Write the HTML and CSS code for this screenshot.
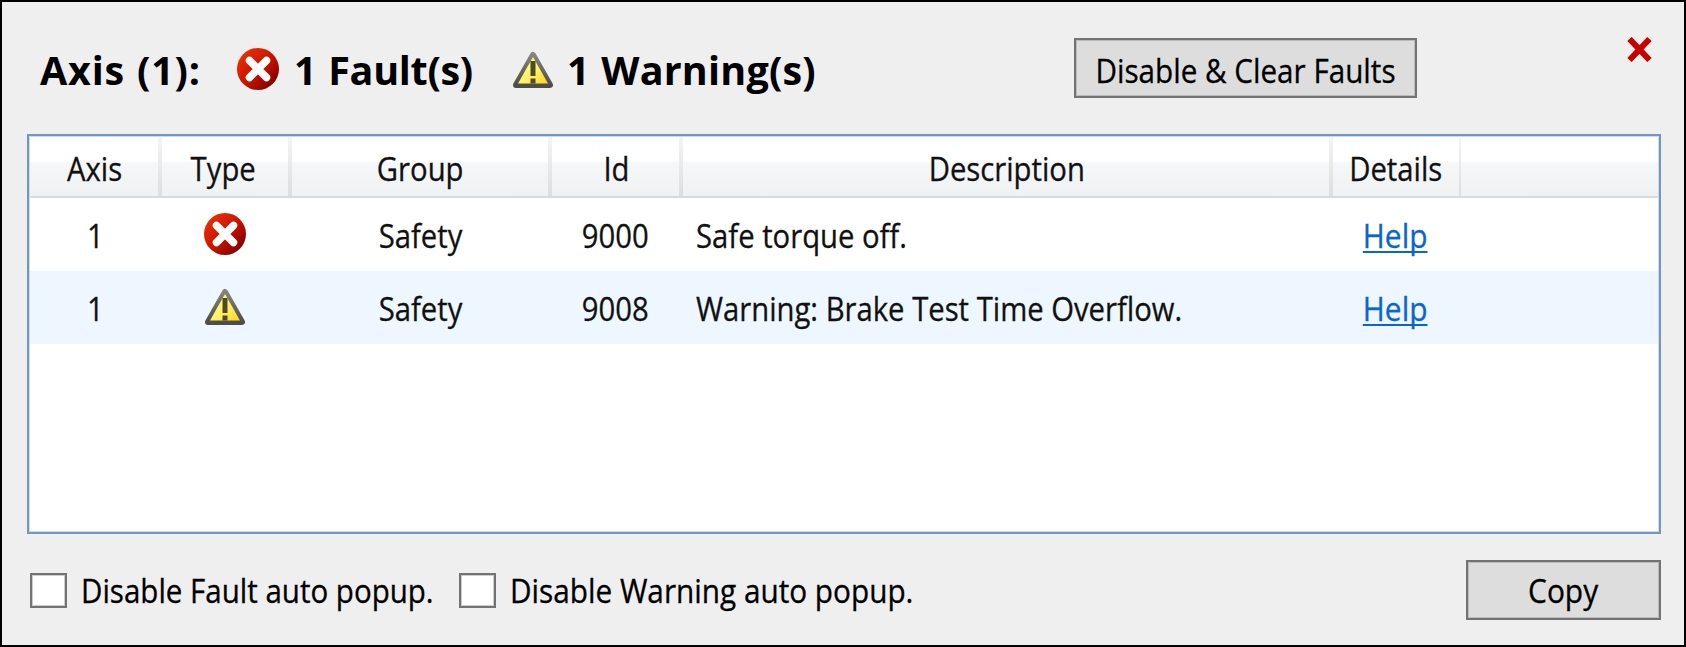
FILE: index.html
```html
<!DOCTYPE html>
<html lang="en">
<head>
<meta charset="utf-8">
<title>Axis faults</title>
<link rel="stylesheet" href="styles.css">
</head>
<body>
<svg class="defs" width="0" height="0" aria-hidden="true">
  <defs>
    <linearGradient id="red" x1="0" y1="0" x2="1" y2="1">
      <stop offset="0.1" stop-color="#e83008"/><stop offset="0.5" stop-color="#cc1400"/><stop offset="0.9" stop-color="#7c0000"/>
    </linearGradient>
    <linearGradient id="yellow" x1="0" y1="0" x2="1" y2="1">
      <stop offset="0.2" stop-color="#fffb90"/><stop offset="0.6" stop-color="#fff060"/><stop offset="1" stop-color="#ffd21c"/>
    </linearGradient>
    <linearGradient id="edge" x1="0" y1="0" x2="0" y2="1">
      <stop offset="0" stop-color="#85857d"/><stop offset="1" stop-color="#4e4e48"/>
    </linearGradient>
    <symbol id="fault" viewBox="0 0 42 42">
      <circle cx="21" cy="21" r="21" fill="url(#red)"/>
      <path d="M12.500 12.500L29.500 29.500M29.500 12.500L12.500 29.500" stroke="#fff" stroke-width="7.500" stroke-linecap="round"/>
    </symbol>
    <symbol id="warn" viewBox="0 0 42 38">
      <path d="M21 4L38 34H4Z" fill="url(#edge)" stroke="url(#edge)" stroke-width="6" stroke-linejoin="round"/>
      <path d="M21 6L36 32.500H6Z" fill="url(#yellow)"/>
      <path d="M18.500 10h5v15h-5zM18.500 27.500h5v5h-5z" fill="#4c4a28"/>
    </symbol>
  </defs>
</svg>
<main class="panel">
  <header class="top">
    <h1 class="title t-axis">Axis (1):</h1>
    <svg class="icon"><use href="#fault"/></svg>
    <h1 class="title t-fault">1 Fault(s)</h1>
    <svg class="icon warn"><use href="#warn"/></svg>
    <h1 class="title t-warn">1 Warning(s)</h1>
    <button class="btn clear"><span class="txt">Disable &amp; Clear Faults</span></button>
    <svg class="close" viewBox="0 0 25 25"><path d="M2.500 2L22.500 23M22.500 2L2.500 23"/></svg>
  </header>
  <section class="list">
    <div class="row head">
      <div><span class="txt">Axis</span></div><div><span class="txt">Type</span></div><div><span class="txt">Group</span></div><div><span class="txt">Id</span></div><div><span class="txt">Description</span></div><div><span class="txt">Details</span></div><div></div>
    </div>
    <div class="row">
      <div><span class="txt">1</span></div><div><svg class="icon"><use href="#fault"/></svg></div><div><span class="txt">Safety</span></div><div><span class="txt">9000</span></div><div class="desc"><span class="txt">Safe torque off.</span></div><div><a class="txt help">Help</a></div><div></div>
    </div>
    <div class="row alt">
      <div><span class="txt">1</span></div><div><svg class="icon warn"><use href="#warn"/></svg></div><div><span class="txt">Safety</span></div><div><span class="txt">9008</span></div><div class="desc"><span class="txt">Warning: Brake Test Time Overflow.</span></div><div><a class="txt help">Help</a></div><div></div>
    </div>
  </section>
  <footer class="bottom">
    <label class="check c1"><span class="box"></span><span class="txt">Disable Fault auto popup.</span></label>
    <label class="check c2"><span class="box"></span><span class="txt">Disable Warning auto popup.</span></label>
    <button class="btn copy"><span class="txt">Copy</span></button>
  </footer>
</main>
</body>
</html>
```
FILE: styles.css
```css
* { box-sizing: border-box; }
body {
  margin: 0;
  font: 32.5px/44px "Open Sans", "Noto Sans", sans-serif;
  color: #111;
}
.defs { position: absolute; }
.panel {
  width: 1686px;
  height: 647px;
  border: 2px solid #000;
  background: #efefef;
  padding: 0 23px 0 25px;
  display: flex;
  flex-direction: column;
  overflow: hidden;
}
.txt { display: inline-block; transform: scaleX(0.9); -webkit-text-stroke: 0.3px; }
.top {
  height: 132px;
  flex: none;
  display: flex;
  align-items: flex-start;
  padding-left: 13px;
}
.title {
  margin: 41px 0 0;
  font-size: 39.5px;
  line-height: 54px;
  font-weight: 700;
  color: #000;
  white-space: nowrap;
  flex: none;
}
.t-axis { width: 198px; word-spacing: 1px; letter-spacing: 0.8px; }
.t-fault { width: 219px; margin-left: 15px; word-spacing: 2px; letter-spacing: -0.3px; }
.t-warn { width: 507px; margin-left: 13px; word-spacing: 1px; letter-spacing: 0.2px; }
.icon { width: 42px; height: 42px; display: block; flex: none; }
.icon.warn { height: 38px; }
.top .icon { margin-top: 46px; margin-left: -1px; }
.top .icon.warn { margin-top: 49px; margin-left: -1px; }
.btn {
  font: inherit;
  color: #000;
  background: #ddd;
  border: 2px solid #737373;
  box-shadow: inset 0 0 0 1px #bbb;
  border-radius: 0;
  padding: 5px 0 0;
  height: 60px;
  flex: none;
  white-space: nowrap;
}
.clear { width: 343px; margin-top: 36px; }
.clear .txt { transform: scaleX(0.912); margin: 0 -10px; }
.close {
  width: 25px;
  height: 25px;
  margin: 35px 0 0 auto;
  position: relative;
  right: 9px;
  fill: none;
  stroke: #c80000;
  stroke-width: 6;
}
.list {
  height: 400px;
  flex: none;
  border: 2px solid #7197c0;
  box-shadow: inset 0 0 0 1px #cfdbe8;
  padding: 1px;
  background: #fff;
}
.row {
  display: grid;
  grid-template-columns: 132px 130px 260px 131px 650px 128px 1fr;
  height: 73px;
  align-items: center;
  text-align: center;
}
.row > div { display: flex; justify-content: center; white-space: nowrap; padding-right: 4px; }
.row > div:first-child { padding-right: 2px; }
.row .txt { position: relative; top: 1px; }
.row .icon { margin-bottom: 1px; }
.row .desc { justify-content: flex-start; padding-left: 13px; }
.desc .txt { transform-origin: left; }
.alt { background: #eef7ff; }
.head {
  height: 61px;
  align-items: stretch;
  border-bottom: 2px solid #d9dadb;
  background: linear-gradient(#fff 0, #fff 24px, #f6f7f9 26px, #f0f1f3 100%);
}
.row.head > div {
  align-items: center;
  padding: 3px 0 0 1px;
  border: solid transparent;
  border-image: linear-gradient(#f5f5f5, #dcddde) 1;
  border-width: 0 4px 0 0;
}
.row.head > div:nth-child(2) { padding: 3px 4px 0 0; }
.row.head > div:nth-child(6) { border-width: 0 2px 0 0; padding-left: 0; }
.row.head > div:last-child { border: 0; }
.row .help {
  color: #0a66cc;
  text-decoration: underline;
  text-decoration-thickness: 2px;
  text-underline-offset: 3px;
  text-decoration-skip-ink: none;
  transform: scaleX(0.92);
}
.bottom { display: flex; align-items: flex-start; padding: 26px 0 0 3px; }
.check { display: flex; align-items: center; height: 60px; white-space: nowrap; flex: none; color: #000; }
.check .txt { transform: scaleX(0.915); transform-origin: left; padding-top: 2px; }
.c1 { width: 429px; }
.c1 .txt { margin-right: -40px; transform: scaleX(0.908); }
.box {
  flex: none;
  width: 37px;
  height: 35px;
  margin: 0 14px 0 0;
  background: #fff;
  border: 2px solid #737373;
  box-shadow: inset 0 0 0 1px #ccc;
}
.copy { width: 195px; margin-left: auto; padding-top: 2px; }
.copy .txt { transform: scaleX(0.92); }
```
